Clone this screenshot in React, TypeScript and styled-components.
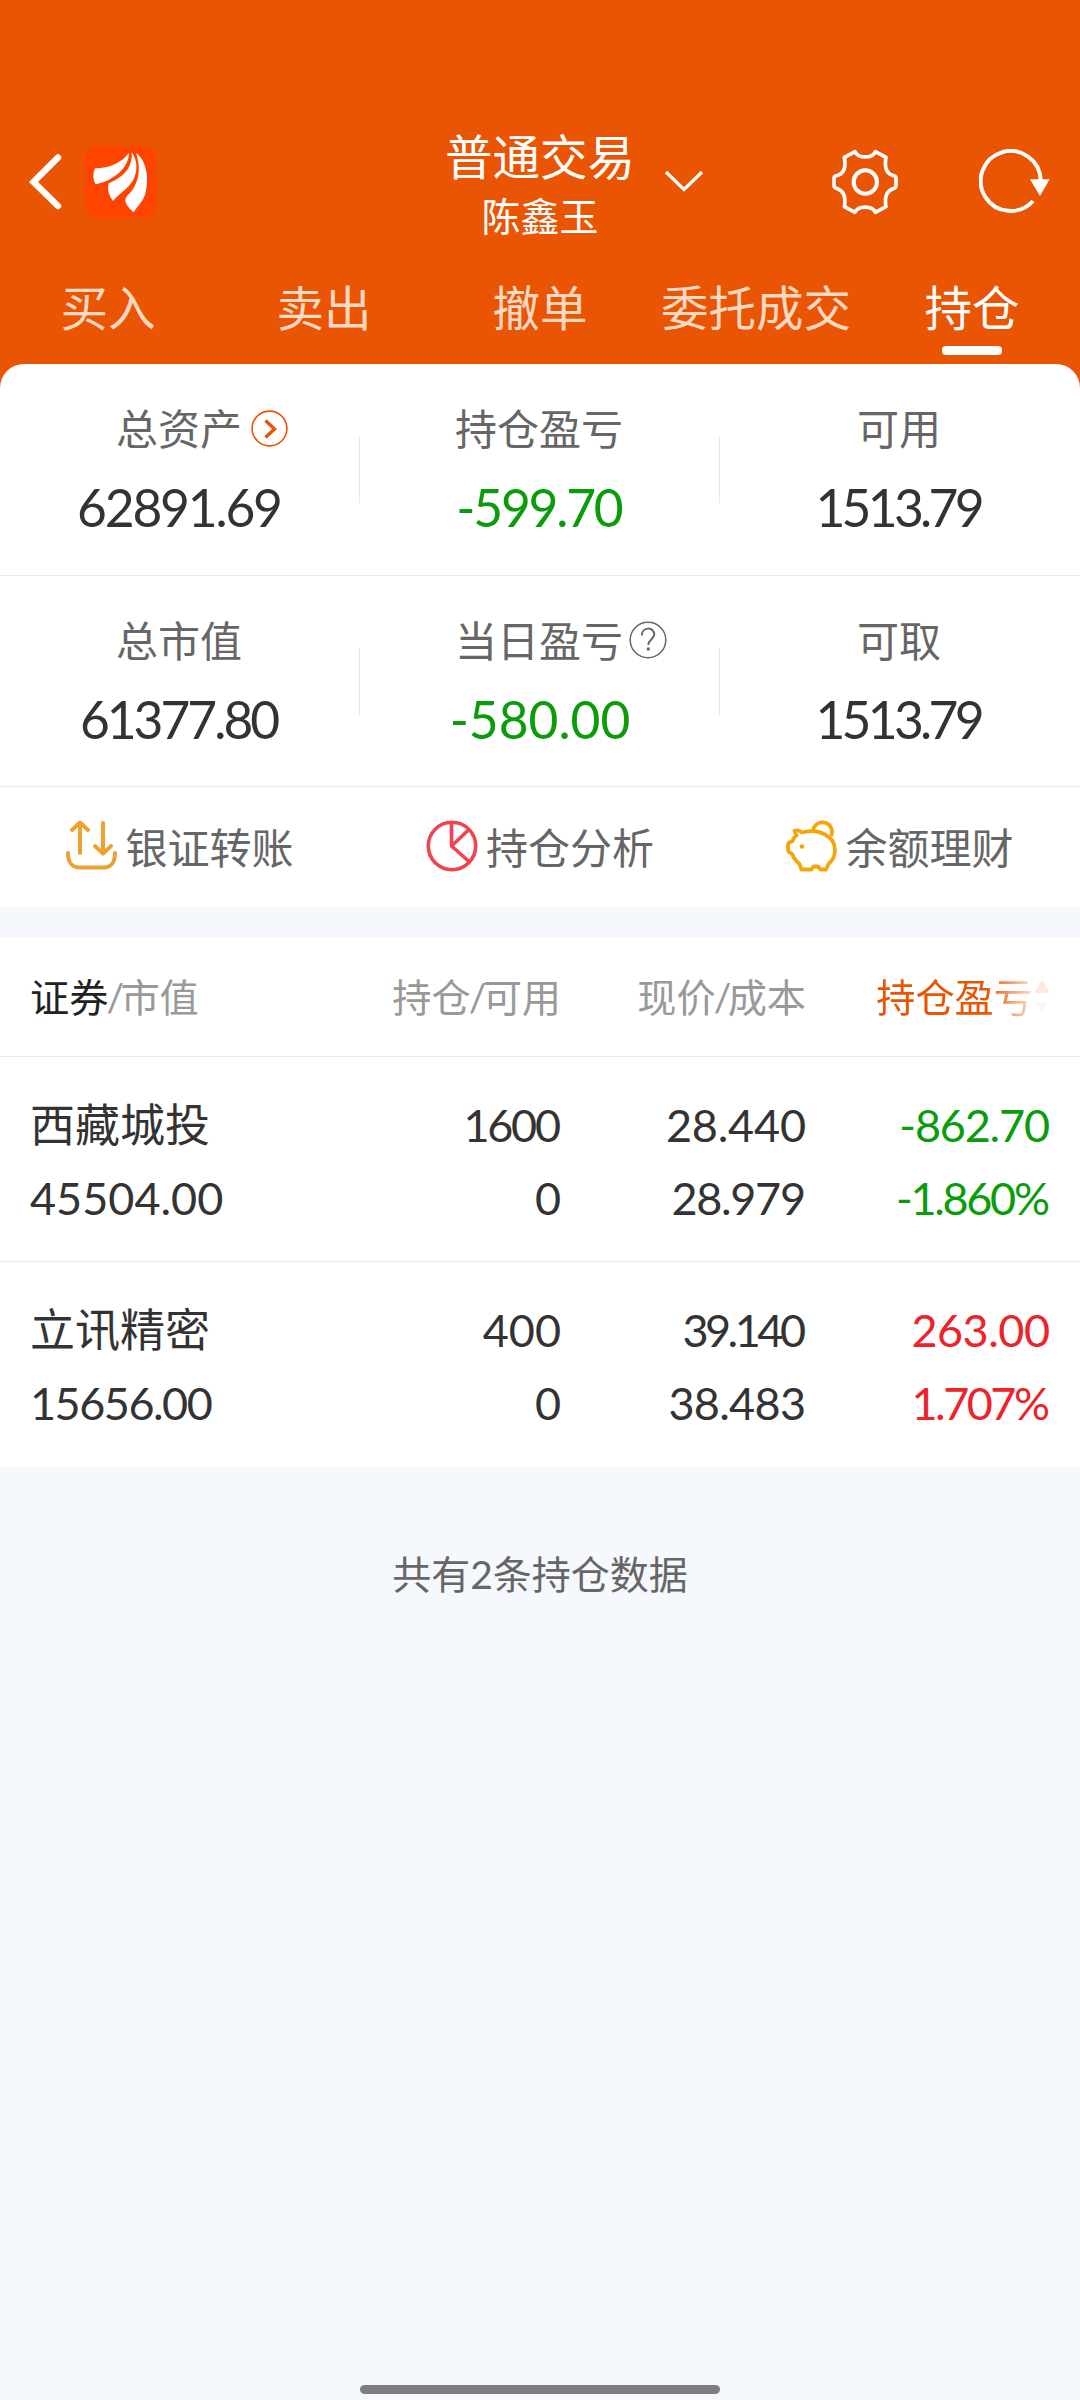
import React from "react";
import styled, { createGlobalStyle } from "styled-components";

const GlobalStyle = createGlobalStyle`
  *, *::before, *::after { box-sizing: border-box; }
  body {
    margin: 0;
    background: #f5f8fc;
    font-family: Lato, "Noto Sans CJK SC", sans-serif;
    color: #333;
  }
`;

const Screen = styled.div`
  width: 1080px;
  height: 2400px;
  display: flex;
  flex-direction: column;
  background: #f5f8fc;
  overflow: hidden;
  white-space: nowrap;
`;

const Header = styled.header`
  background: #ea5504;
  height: 388px;
  padding-top: 127px;
  flex: none;
`;

const TitleBar = styled.div`
  height: 120px;
  display: grid;
  grid-template-columns: 1fr auto 1fr;
`;

const TitleLeft = styled.div`
  display: flex;
  align-items: center;
  gap: 23px;
  padding: 0 0 10px 28px;
`;

const TitleRight = styled.div`
  display: flex;
  align-items: center;
  padding: 0 30px 10px 29px;
`;

const TitleBlock = styled.div`
  text-align: center;
  color: #fff;
`;

const Title = styled.div`
  font-size: 47.5px;
  line-height: 60px;
`;

const UserName = styled.div`
  font-size: 39px;
  line-height: 58px;
`;

const Spacer = styled.div`
  flex: 1;
`;

const GearSlot = styled.div`
  display: flex;
  margin-right: 80px;
`;

const Tabs = styled.nav`
  display: grid;
  grid-template-columns: repeat(5, 216px);
  margin-top: 31px;
`;

const Tab = styled.div<{ $active?: boolean }>`
  display: flex;
  flex-direction: column;
  align-items: center;
  gap: 8px;
  font-size: 47.5px;
  line-height: 60px;
  color: ${(p) => (p.$active ? "#fff" : "#fcd9c3")};

  &::after {
    content: "";
    width: 60px;
    height: 9px;
    border-radius: 4px;
    background: ${(p) => (p.$active ? "#fff" : "transparent")};
  }
`;

const Summary = styled.section`
  flex: none;
  margin-top: -24px;
  background: #fff;
  border-radius: 24px 24px 0 0;
  height: 543px;
`;

const StatRow = styled.div`
  display: grid;
  grid-template-columns: repeat(3, 360px);
  height: 211.5px;
  padding-top: 37px;
  border-bottom: 1px solid #ececec;
`;

const Stat = styled.div`
  display: flex;
  flex-direction: column;
  align-items: center;
  position: relative;

  & + &::before {
    content: "";
    position: absolute;
    left: -1px;
    top: 35px;
    width: 1px;
    height: 67px;
    background: #e8e8e8;
  }
`;

const StatLabel = styled.div`
  display: flex;
  align-items: center;
  margin-right: 2px;
  font-size: 42px;
  line-height: 56px;
  color: #666;
`;

const IconSlot = styled.span<{ $gap: number }>`
  width: 0;
  height: 37px;
  display: flex;
  margin-bottom: 2px;
  overflow: visible;

  svg {
    flex: none;
    margin-left: ${(p) => p.$gap}px;
  }
`;

const StatValue = styled.div<{ $color?: string; $track: number }>`
  margin-top: 20px;
  font-size: 51.5px;
  line-height: 60px;
  letter-spacing: ${(p) => p.$track}px;
  margin-right: ${(p) => -p.$track}px;
  color: ${(p) => p.$color ?? "#333"};
`;

const Actions = styled.div`
  display: grid;
  grid-template-columns: repeat(3, 360px);
  height: 120px;
`;

const Action = styled.div`
  display: flex;
  align-items: center;
  justify-content: center;
  gap: 8px;
  padding-top: 1px;
  font-size: 42px;
  line-height: 60px;
  color: #666;

  svg {
    flex: none;
    margin-bottom: 4px;
  }
`;

const Holdings = styled.section`
  flex: none;
  margin-top: 30px;
  background: #fff;
`;

const HoldingGrid = styled.div`
  display: grid;
  grid-template-columns: 302px 229px 245px 244px;
  padding: 0 30px;
`;

const TableHead = styled(HoldingGrid)`
  height: 120px;
  align-items: center;
  padding-top: 1px;
  border-bottom: 1px solid #ececec;
  font-size: 39.2px;
  line-height: 60px;
  color: #999;
`;

const HeadCell = styled.div<{ $left?: boolean }>`
  text-align: ${(p) => (p.$left ? "left" : "right")};
`;

const Strong = styled.span`
  color: #222;
`;

const Slash = styled.span`
  display: inline-block;
  width: 12px;
  text-align: center;
  text-indent: -2px;
`;

const SortCell = styled.div`
  display: flex;
  justify-content: flex-end;
  align-items: center;
  gap: 1px;
  color: #ea5504;
  mask-image: linear-gradient(to right, #000 180px, rgba(0, 0, 0, 0.13) 230px);
`;

const HoldingRow = styled(HoldingGrid)`
  height: 205px;
  padding-top: 32px;
  border-bottom: 1px solid #ececec;

  &:last-child {
    border-bottom: none;
  }
`;

const Cell = styled.div<{ $left?: boolean; $color?: string }>`
  display: flex;
  flex-direction: column;
  align-items: ${(p) => (p.$left ? "flex-start" : "flex-end")};
  color: ${(p) => p.$color ?? "#333"};
  font-size: 45px;
  line-height: 73px;
`;

const Num = styled.span<{ $track?: number }>`
  letter-spacing: ${(p) => p.$track ?? 0}px;
  margin-right: ${(p) => -(p.$track ?? 0)}px;
`;

const StockName = styled.span`
  font-size: 45px;
`;

const Footer = styled.div`
  margin-top: 77px;
  text-align: center;
  font-size: 39px;
  line-height: 60px;
  color: #666;
`;

const HomeBar = styled.div`
  flex: none;
  width: 360px;
  height: 9px;
  margin: auto auto 6px;
  border-radius: 5px;
  background: #7d7d7d;
`;

const BackIcon = () => (
  <svg width="34" height="56" viewBox="0 0 34 56" fill="none" stroke="#fff" strokeWidth="6.4" strokeLinecap="round" strokeLinejoin="miter">
    <path d="M30 3.5 5.5 28 30 52" />
  </svg>
);

const Logo = () => (
  <svg width="72" height="72" viewBox="256 79 216 216">
    <rect x="256" y="79" width="214" height="214" rx="36" fill="#ff4400" />
    <g fill="#fff">
      <path d="M286 146C330 144 366 130 388 99C389 130 360 178 287 194Q275 170 286 146Z" />
      <path d="M396 98C414 122 415 156 399 184C384 208 358 222 340 244Q320 218 327 191C368 174 400 146 396 98Z" />
      <path d="M409 100C443 124 448 180 437 222C430 246 413 260 402 278Q366 248 382 229C411 204 429 156 409 100Z" />
    </g>
  </svg>
);

const DownIcon = () => (
  <svg width="40" height="26" viewBox="0 0 40 26" fill="none" stroke="#fff" strokeWidth="3.2">
    <path d="M2 3 20 20.5 38 3" />
  </svg>
);

const GearIcon = () => (
  <svg width="68" height="68" viewBox="214 84 204 204" fill="none" stroke="#fff" strokeWidth="11" strokeLinejoin="round">
    <path d="M286 95C296 116 338 116 347 95L379 112C374 138 378 162 405 168Q409 170 409 175V197Q409 202 405 204C378 212 374 234 379 260L347 277C338 256 296 256 286 277L254 260C259 234 255 212 228 204Q223 202 223 197V175Q223 170 228 168C255 162 259 138 254 112Z" />
    <circle cx="317" cy="186" r="35" strokeWidth="12" />
  </svg>
);

const RefreshIcon = () => (
  <svg width="71" height="66" viewBox="658 87 213 198" fill="none" stroke="#fff" strokeWidth="12">
    <path d="M843 180A90 90 0 1 0 820 243" />
    <path d="M811 178H870L841 228Z" fill="#fff" stroke="none" />
  </svg>
);

const CircleArrow = () => (
  <svg width="37" height="37" viewBox="0 0 37 37" fill="none" stroke="#ea5504">
    <circle cx="18.5" cy="18.5" r="17.4" strokeWidth="1.6" />
    <path d="M14.5 10.5 23.5 19 14.5 27.5" strokeWidth="3.4" />
  </svg>
);

const QuestionIcon = () => (
  <svg width="38" height="38" viewBox="0 0 38 38" fill="none" stroke="#666">
    <circle cx="19" cy="19" r="17.8" strokeWidth="1.5" />
    <path d="M12.8 14.5C12.8 5.5 25.2 5.5 25.2 13.5C25.2 18 19.3 18.5 19.3 24" strokeWidth="2" />
    <circle cx="19.3" cy="28" r="1.7" fill="#666" stroke="none" />
  </svg>
);

const TransferIcon = () => (
  <svg width="51" height="51" viewBox="0 0 51 51" fill="none" stroke="#f0a030" strokeWidth="4" strokeLinecap="round" strokeLinejoin="round">
    <path d="M14 33V3M6 10 14 2.5 22 10" />
    <path d="M37 3V33M29 26 37 33.5 45 26" />
    <path d="M2 33C2 42 6 47.5 13 47.5H38C45 47.5 49 42 49 33" />
  </svg>
);

const PieIcon = () => (
  <svg width="52" height="52" viewBox="0 0 52 52" fill="none" stroke="#f04450" strokeWidth="3.6">
    <circle cx="26" cy="26" r="23.7" />
    <path d="M25.5 2V26L42.5 10M25.5 26 43 41.5" strokeLinejoin="round" />
  </svg>
);

const PigIcon = () => (
  <svg width="51" height="52" viewBox="0 0 51 52" fill="none" stroke="#f2a60c" strokeWidth="3.8" strokeLinejoin="round">
    <path d="M27 11A9.5 9.5 0 1 1 45 16" />
    <path d="M8.5 10.8C11 10 14 10.500 16 12.500C24 10.500 32 10.500 38 14C45 17.500 49 23 49 30C49 37 46 41 42.500 44L40 49.500H34.500L32 46.500H27.500L25.500 49.500H15.500L13.500 44C10 41 7.500 38 6.500 34.500L2.500 31.500C1.800 28 1.800 25 2.500 23L6.500 21C7.500 18 9 16.500 10.500 15.500Z" />
    <circle cx="16" cy="26.500" r="2.300" fill="#f2a60c" stroke="none" />
  </svg>
);

const SortIcon = () => (
  <svg width="16" height="36" viewBox="0 0 16 36">
    <path d="M8 1 15.5 14H.5Z" fill="#ea5504" />
    <path d="M1.5 23H14.5L8 34Z" fill="#c8c8c8" />
  </svg>
);

const GREEN = "#0a9c0a";
const RED = "#ee2229";

type StatItem = { label: string; value: string; track: number; color?: string; icon?: React.ReactNode; gap?: number };

const stats: StatItem[][] = [
  [
    { label: "总资产", value: "62891.69", track: -2.2, icon: <CircleArrow />, gap: 9 },
    { label: "持仓盈亏", value: "-599.70", track: -2.2, color: GREEN },
    { label: "可用", value: "1513.79", track: -3.7 },
  ],
  [
    { label: "总市值", value: "61377.80", track: -3 },
    { label: "当日盈亏", value: "-580.00", track: 0, color: GREEN, icon: <QuestionIcon />, gap: 6 },
    { label: "可取", value: "1513.79", track: -3.7 },
  ],
];

type N = [string, number];
type Holding = { name: string; value: N; qty: N; avail: N; price: N; cost: N; pl: N; pct: N; color: string };

const holdings: Holding[] = [
  {
    name: "西藏城投", value: ["45504.00", 0], qty: ["1600", -2.3], avail: ["0", 0],
    price: ["28.440", -0.2], cost: ["28.979", -1.3], pl: ["-862.70", -1.2], pct: ["-1.860%", -2.3], color: GREEN,
  },
  {
    name: "立讯精密", value: ["15656.00", -1.5], qty: ["400", 0], avail: ["0", 0],
    price: ["39.140", -3.5], cost: ["38.483", -0.7], pl: ["263.00", -0.5], pct: ["1.707%", -2.5], color: RED,
  },
];

const tabs = ["买入", "卖出", "撤单", "委托成交", "持仓"];

const NumText = ({ n }: { n: N }) => <Num $track={n[1]}>{n[0]}</Num>;

export default function App() {
  return (
    <>
      <GlobalStyle />
      <Screen>
        <Header>
          <TitleBar>
            <TitleLeft>
              <BackIcon />
              <Logo />
            </TitleLeft>
            <TitleBlock>
              <Title>普通交易</Title>
              <UserName>陈鑫玉</UserName>
            </TitleBlock>
            <TitleRight>
              <DownIcon />
              <Spacer />
              <GearSlot>
                <GearIcon />
              </GearSlot>
              <RefreshIcon />
            </TitleRight>
          </TitleBar>
          <Tabs>
            {tabs.map((t) => (
              <Tab key={t} $active={t === "持仓"}>{t}</Tab>
            ))}
          </Tabs>
        </Header>

        <Summary>
          {stats.map((row, i) => (
            <StatRow key={i}>
              {row.map((s) => (
                <Stat key={s.label}>
                  <StatLabel>
                    {s.label}
                    {s.icon && <IconSlot $gap={s.gap ?? 0}>{s.icon}</IconSlot>}
                  </StatLabel>
                  <StatValue $color={s.color} $track={s.track}>{s.value}</StatValue>
                </Stat>
              ))}
            </StatRow>
          ))}
          <Actions>
            <Action><TransferIcon />银证转账</Action>
            <Action><PieIcon />持仓分析</Action>
            <Action><PigIcon />余额理财</Action>
          </Actions>
        </Summary>

        <Holdings>
          <TableHead>
            <HeadCell $left><Strong>证券</Strong><Slash>/</Slash>市值</HeadCell>
            <HeadCell>持仓<Slash>/</Slash>可用</HeadCell>
            <HeadCell>现价<Slash>/</Slash>成本</HeadCell>
            <SortCell>持仓盈亏<SortIcon /></SortCell>
          </TableHead>
          {holdings.map((h) => (
            <HoldingRow key={h.name}>
              <Cell $left>
                <StockName>{h.name}</StockName>
                <NumText n={h.value} />
              </Cell>
              <Cell><NumText n={h.qty} /><NumText n={h.avail} /></Cell>
              <Cell><NumText n={h.price} /><NumText n={h.cost} /></Cell>
              <Cell $color={h.color}><NumText n={h.pl} /><NumText n={h.pct} /></Cell>
            </HoldingRow>
          ))}
        </Holdings>

        <Footer>共有2条持仓数据</Footer>
        <HomeBar />
      </Screen>
    </>
  );
}
